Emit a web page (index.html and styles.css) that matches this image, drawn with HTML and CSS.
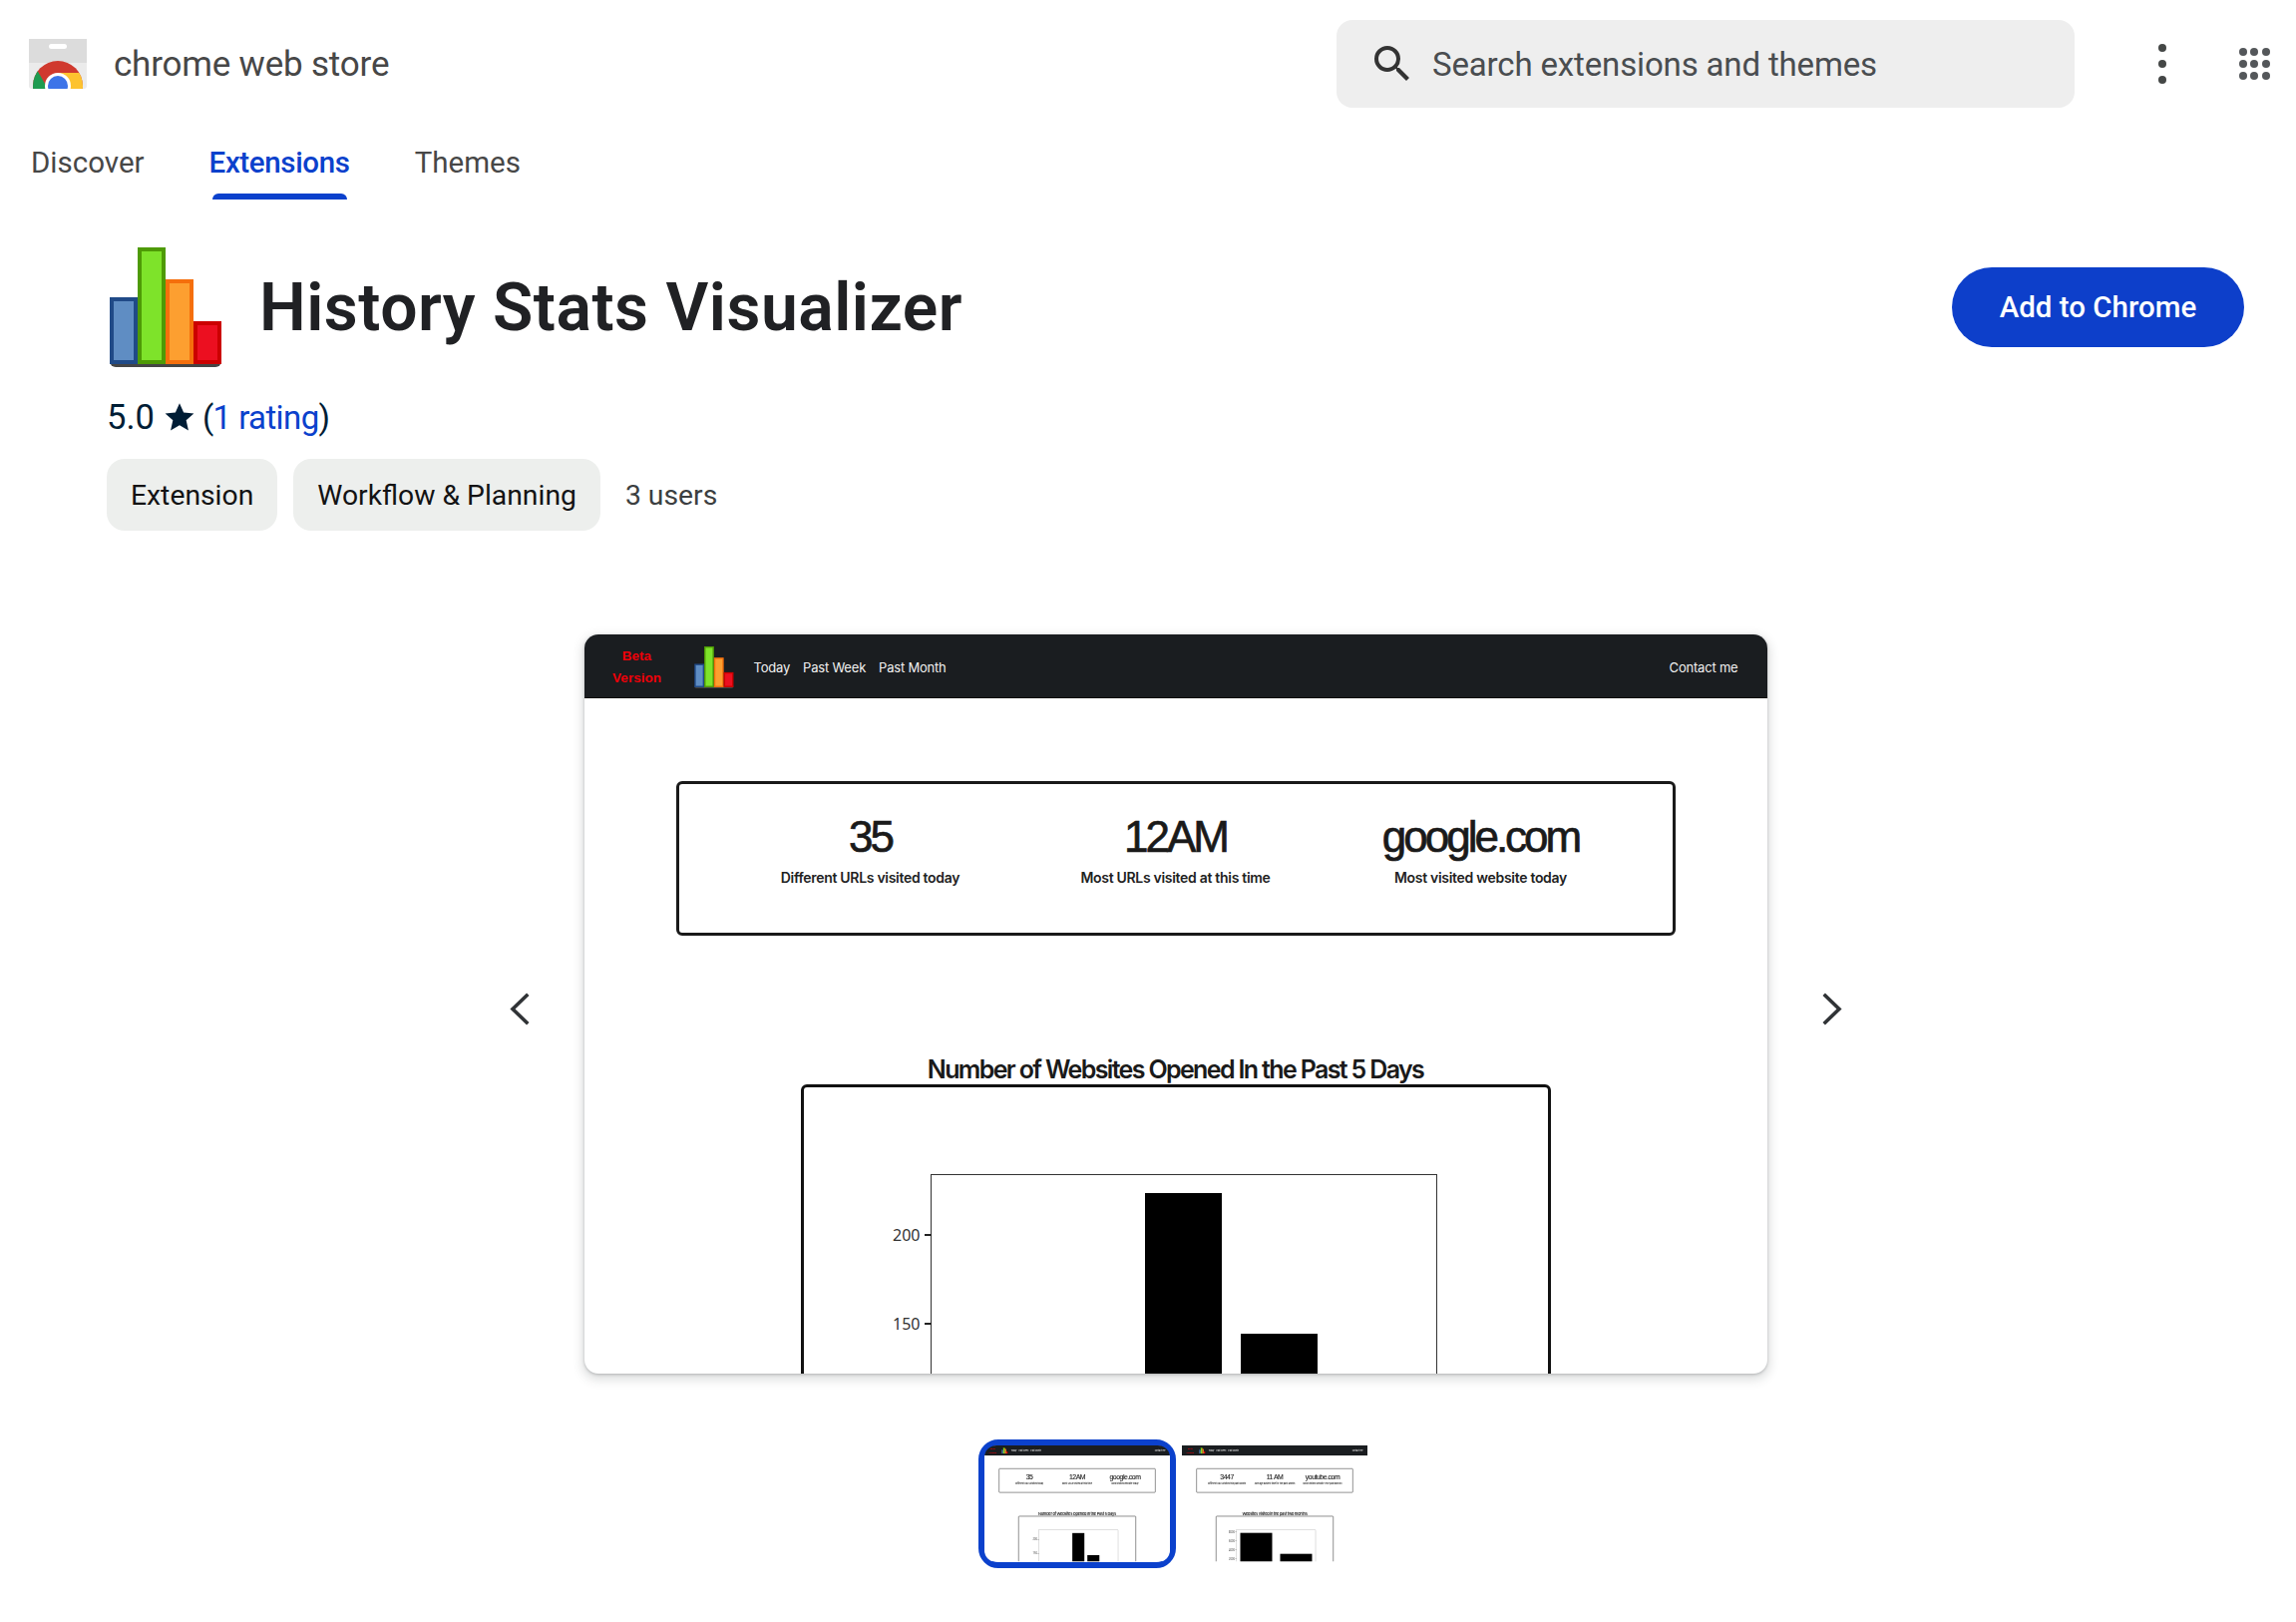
FILE: index.html
```html
<!DOCTYPE html>
<html lang="en">
<head>
<meta charset="utf-8">
<title>History Stats Visualizer - Chrome Web Store</title>
<link rel="stylesheet" href="styles.css">
</head>
<body>
<svg class="defs" width="0" height="0" aria-hidden="true">
  <symbol id="bars" viewBox="-3 0 116 120">
    <path d="M0 113h112v1a6 6 0 0 1-6 6H6a6 6 0 0 1-6-6z" fill="#454545"/>
    <rect x="2" y="52" width="24" height="63" fill="#5f8dc3" stroke="#204a87" stroke-width="4"/>
    <rect x="30" y="2" width="24" height="113" fill="#7ee32a" stroke="#4e9a06" stroke-width="4"/>
    <rect x="58" y="34" width="24" height="81" fill="#fd9f30" stroke="#f56f0c" stroke-width="4"/>
    <rect x="86" y="76" width="24" height="39" fill="#ec0f20" stroke="#cc0000" stroke-width="4"/>
  </symbol>
</svg>

<header class="topbar">
  <svg class="store-logo" viewBox="0 0 58 50" aria-hidden="true">
    <defs><clipPath id="disc"><circle cx="29" cy="47" r="25"/></clipPath></defs>
    <path d="M0 0h58v47a3 3 0 0 1-3 3H3a3 3 0 0 1-3-3z" fill="#ebebeb"/>
    <rect width="58" height="24" fill="#dcdcdc"/>
    <rect x="20" y="5" width="18" height="5" rx="2.5" fill="#fff"/>
    <g clip-path="url(#disc)">
      <rect x="0" y="20" width="58" height="30" fill="#d0392e"/>
      <path d="M0 50V30l8 1 11 19z" fill="#1e9b50"/>
      <path d="M29 34h29v16H29z" fill="#fdc32f"/>
    </g>
    <circle cx="29" cy="47" r="13" fill="#fff"/>
    <circle cx="29" cy="47" r="10" fill="#3d74e8"/>
  </svg>
  <span class="store-name">chrome web store</span>
  <div class="search">
    <svg class="search-icon" viewBox="0 0 24 24" aria-hidden="true"><path d="M15.5 14h-.79l-.28-.27A6.47 6.47 0 0 0 16 9.5 6.5 6.5 0 1 0 9.5 16c1.61 0 3.09-.59 4.23-1.57l.27.28v.79l5 4.99L20.49 19l-4.99-5zm-6 0C7.01 14 5 11.99 5 9.5S7.01 5 9.5 5 14 7.01 14 9.5 11.99 14 9.5 14z"/></svg>
    <span class="search-text">Search extensions and themes</span>
  </div>
  <svg class="kebab" viewBox="0 0 24 48" aria-hidden="true"><circle cx="12" cy="8" r="4"/><circle cx="12" cy="24" r="4"/><circle cx="12" cy="40" r="4"/></svg>
  <svg class="apps" viewBox="0 0 36 36" aria-hidden="true">
    <circle cx="7" cy="6" r="4"/><circle cx="18" cy="6" r="4"/><circle cx="30" cy="6" r="4"/>
    <circle cx="7" cy="18" r="4"/><circle cx="18" cy="18" r="4"/><circle cx="30" cy="18" r="4"/>
    <circle cx="7" cy="30" r="4"/><circle cx="18" cy="30" r="4"/><circle cx="30" cy="30" r="4"/>
  </svg>
</header>

<nav class="tabs">
  <a class="tab">Discover</a>
  <a class="tab tab-active">Extensions</a>
  <a class="tab">Themes</a>
</nav>

<main class="main">
  <section class="title-row">
    <svg class="ext-icon"><use href="#bars"/></svg>
    <h1 class="title">History Stats Visualizer</h1>
    <button class="add-btn">Add to Chrome</button>
  </section>

  <div class="rating">
    <span class="rating-value">5.0</span>
    <svg class="star" viewBox="0 0 24 24" aria-hidden="true"><path d="M12 1.6l3.1 7.1 7.7.7-5.8 5.1 1.7 7.6L12 18.2l-6.7 3.9L7 14.5 1.2 9.4l7.7-.7z"/></svg>
    <span class="rating-count">(<a class="rating-link">1 rating</a>)</span>
  </div>

  <div class="chips">
    <span class="chip">Extension</span>
    <span class="chip">Workflow &amp; Planning</span>
    <span class="users">3 users</span>
  </div>

  <section class="carousel">
    <svg class="arrow" viewBox="0 0 60 60" aria-hidden="true"><path d="M37 17L23 30.5 37 44"/></svg>
    <div class="shot shot-main">
      <div class="shot-bar">
        <div class="beta">Beta<br>Version</div>
        <svg class="shot-logo"><use href="#bars"/></svg>
        <div class="shot-nav"><span>Today</span><span>Past Week</span><span>Past Month</span></div>
        <span class="contact">Contact me</span>
      </div>
      <div class="stats">
        <div class="stat"><div class="stat-num">35</div><div class="stat-cap">Different URLs visited today</div></div>
        <div class="stat"><div class="stat-num">12AM</div><div class="stat-cap">Most URLs visited at this time</div></div>
        <div class="stat"><div class="stat-num">google.com</div><div class="stat-cap">Most visited website today</div></div>
      </div>
      <h2 class="chart-title">Number of Websites Opened In the Past 5 Days</h2>
      <div class="chart">
        <div class="plot">
          <span class="tick" style="top:50px">200</span>
          <span class="tick" style="top:139px">150</span>
          <i class="bar" style="left:214px;width:77px;top:18px"></i>
          <i class="bar" style="left:310px;width:77px;top:159px"></i>
        </div>
      </div>
    </div>
    <svg class="arrow" viewBox="0 0 60 60" aria-hidden="true"><path d="M23 17L37 30.5 23 44"/></svg>
  </section>

  <div class="thumbs">
    <div class="thumb thumb-active">
      <div class="thumb-view">
        <div class="shot shot-mini">
          <div class="shot-bar">
            <div class="beta">Beta<br>Version</div>
            <svg class="shot-logo"><use href="#bars"/></svg>
            <div class="shot-nav"><span>Today</span><span>Past Week</span><span>Past Month</span></div>
            <span class="contact">Contact me</span>
          </div>
          <div class="stats">
            <div class="stat"><div class="stat-num">35</div><div class="stat-cap">Different URLs visited today</div></div>
            <div class="stat"><div class="stat-num">12AM</div><div class="stat-cap">Most URLs visited at this time</div></div>
            <div class="stat"><div class="stat-num">google.com</div><div class="stat-cap">Most visited website today</div></div>
          </div>
          <h2 class="chart-title">Number of Websites Opened In the Past 5 Days</h2>
          <div class="chart">
            <div class="plot">
              <span class="tick" style="top:50px">200</span>
              <span class="tick" style="top:139px">150</span>
              <i class="bar" style="left:214px;width:77px;top:18px"></i>
              <i class="bar" style="left:310px;width:77px;top:159px"></i>
            </div>
          </div>
        </div>
      </div>
    </div>
    <div class="thumb">
      <div class="thumb-view">
        <div class="shot shot-mini">
          <div class="shot-bar">
            <div class="beta">Beta<br>Version</div>
            <svg class="shot-logo"><use href="#bars"/></svg>
            <div class="shot-nav"><span>Today</span><span>Past Week</span><span>Past Month</span></div>
            <span class="contact">Contact me</span>
          </div>
          <div class="stats">
            <div class="stat"><div class="stat-num">3447</div><div class="stat-cap">Different URLs visited this past Month</div></div>
            <div class="stat"><div class="stat-num">11 AM</div><div class="stat-cap">Average busiest time for the past Month</div></div>
            <div class="stat"><div class="stat-num">youtube.com</div><div class="stat-cap">Most visited website (The past Month)</div></div>
          </div>
          <h2 class="chart-title">Websites visited in the past two months</h2>
          <div class="chart">
            <div class="plot">
              <span class="tick" style="top:0">8000</span>
              <span class="tick" style="top:58px">6000</span>
              <span class="tick" style="top:115px">4000</span>
              <span class="tick" style="top:173px">2000</span>
              <i class="bar" style="left:25px;width:204px;top:17px"></i>
              <i class="bar" style="left:280px;width:204px;top:151px"></i>
            </div>
          </div>
        </div>
      </div>
    </div>
  </div>
</main>
</body>
</html>
```

FILE: styles.css
```css
* { box-sizing: border-box; }
html, body { margin: 0; padding: 0; }
body {
  width: 2302px;
  height: 1626px;
  overflow: hidden;
  background: #fff;
  font-family: Roboto, "Noto Sans", sans-serif;
  color: #1f1f1f;
}
.defs { position: absolute; }

/* top bar */
.topbar {
  display: flex;
  align-items: center;
  height: 88px;
  margin-top: 20px;
  padding: 0 24px 0 29px;
}
.store-logo { width: 58px; height: 50px; flex: none; }
.store-name {
  margin-left: 27px;
  font-size: 35px;
  color: #474747;
  letter-spacing: -0.2px;
}
.search {
  display: flex;
  align-items: center;
  gap: 16px;
  width: 740px;
  height: 88px;
  margin-left: auto;
  padding-left: 32px;
  background: #eee;
  border-radius: 16px;
}
.search-icon { width: 48px; height: 48px; fill: #333; flex: none; }
.search-text { font-size: 33px; color: #4a4d50; letter-spacing: -0.15px; }
.kebab { width: 24px; height: 48px; margin-left: 76px; fill: #444746; flex: none; }
.apps { width: 36px; height: 36px; margin-left: 62px; fill: #54575a; flex: none; }

/* tabs */
.tabs {
  display: flex;
  gap: 65px;
  height: 92px;
  padding: 22px 0 0 31px;
}
.tab {
  position: relative;
  height: 70px;
  font-size: 29.5px;
  font-weight: 400;
  line-height: 66px;
  color: #474747;
}
.tab-active { color: #0b41cc; font-weight: 500; letter-spacing: -0.35px; }
.tab-active::after {
  content: "";
  position: absolute;
  left: 3px;
  right: 3px;
  bottom: 0;
  height: 6px;
  background: #0b41cc;
  border-radius: 6px 6px 0 0;
}

/* main */
.main { padding: 48px 52px 0 107px; }
.title-row { display: flex; align-items: center; height: 120px; }
.ext-icon { width: 116px; height: 120px; flex: none; }
.title {
  margin: 0 0 0 37px;
  font-size: 66px;
  font-weight: 600;
  color: #202124;
  letter-spacing: 0.5px;
}
.add-btn {
  width: 293px;
  height: 80px;
  margin-left: auto;
  border: 0;
  border-radius: 40px;
  background: #0d3fca;
  color: #fff;
  font: 500 29.5px Roboto, sans-serif;
}
.rating {
  display: flex;
  align-items: center;
  gap: 9px;
  height: 40px;
  margin-top: 30px;
  font-size: 33px;
  color: #001d35;
}
.rating-value { font-size: 34.5px; }
.rating-count { letter-spacing: -0.6px; }
.star { width: 32px; height: 32px; margin-right: -2px; fill: #001d35; flex: none; }
.rating-link { color: #0b41cc; }
.chips {
  display: flex;
  align-items: center;
  gap: 16px;
  margin-top: 22px;
}
.chip {
  display: flex;
  align-items: center;
  height: 72px;
  padding: 0 24px;
  background: #edefed;
  border-radius: 18px;
  font-size: 28.3px;
  color: #131314;
}
.users { margin-left: 9px; font-size: 28.3px; color: #3c3f41; }

/* carousel */
.carousel {
  display: flex;
  align-items: center;
  justify-content: center;
  gap: 35px;
  margin-top: 104px;
}
.arrow {
  width: 60px;
  height: 60px;
  margin-top: 9px;
  fill: none;
  stroke: #303336;
  stroke-width: 3.6px;
  stroke-linecap: square;
  flex: none;
}

.shot {
  width: 1186px;
  height: 741px;
  overflow: hidden;
  background: #fff;
  flex: none;
}
.shot-main {
  border-radius: 14px;
  box-shadow: 0 1px 3px rgba(60, 64, 67, .3), 0 4px 10px 3px rgba(60, 64, 67, .15);
}
.shot-mini {
  transform: scale(.15683);
  transform-origin: 0 0;
}
.shot-bar {
  display: flex;
  align-items: center;
  height: 64px;
  padding-top: 3px;
  background: #1a1d20;
  border-bottom: 1px solid #000;
  color: #f1f1f1;
  font: 13px/20px Inter, "Liberation Sans", sans-serif;
}
.beta {
  width: 106px;
  text-align: center;
  color: #ee0008;
  font: bold 13.5px/22px "Liberation Sans", sans-serif;
}
.shot-logo { width: 43px; height: 42px; margin-left: 2px; flex: none; }
.shot-nav { display: flex; gap: 13px; margin-left: 19px; letter-spacing: -.2px; }
.contact { margin-left: auto; margin-right: 29px; letter-spacing: -.2px; }

.stats {
  display: grid;
  grid-template-columns: repeat(3, 306px);
  justify-content: center;
  width: 1002px;
  height: 155px;
  margin: 83px auto 0;
  padding-top: 27px;
  border: 3px solid #1a1a1a;
  border-radius: 6px;
  text-align: center;
}
.stat-num {
  font: 44px/52px "Liberation Sans", sans-serif;
  letter-spacing: -3px;
  color: #1a1a1a;
  -webkit-text-stroke: .7px #1a1a1a;
}
.stat-cap {
  margin-top: 5px;
  font: 600 14px/20px Inter, "Liberation Sans", sans-serif;
  letter-spacing: -.3px;
  color: #222;
}
.chart-title {
  height: 30px;
  margin: 119px 0 0;
  font: 600 25px/30px Inter, "Liberation Sans", sans-serif;
  letter-spacing: -1.65px;
  text-align: center;
  color: #1a1a1a;
}
.chart {
  width: 752px;
  height: 400px;
  margin: 0 auto;
  padding: 87px 0 0 127px;
  border: 3px solid #111;
  border-radius: 6px;
}
.plot {
  position: relative;
  width: 508px;
  height: 300px;
  border: 1.5px solid #333;
}
.tick {
  position: absolute;
  right: 100%;
  padding-right: 11px;
  font: 16px/20px "Noto Sans", sans-serif;
  color: #333;
  white-space: nowrap;
}
.tick::after {
  content: "";
  position: absolute;
  right: 0;
  top: 9px;
  width: 7px;
  height: 2px;
  background: #222;
}
.bar { position: absolute; bottom: -2px; background: #000; }

/* thumbnails */
.thumbs {
  display: flex;
  justify-content: center;
  margin-top: 66px;
}
.thumb {
  width: 198px;
  height: 129px;
  border: 6px solid transparent;
  border-radius: 20px;
}
.thumb-active { border-color: #0b41cc; }
.thumb-view {
  width: 186px;
  height: 117px;
  overflow: hidden;
  filter: blur(.4px);
}
.thumb-active .thumb-view { border-radius: 12px; }
```
